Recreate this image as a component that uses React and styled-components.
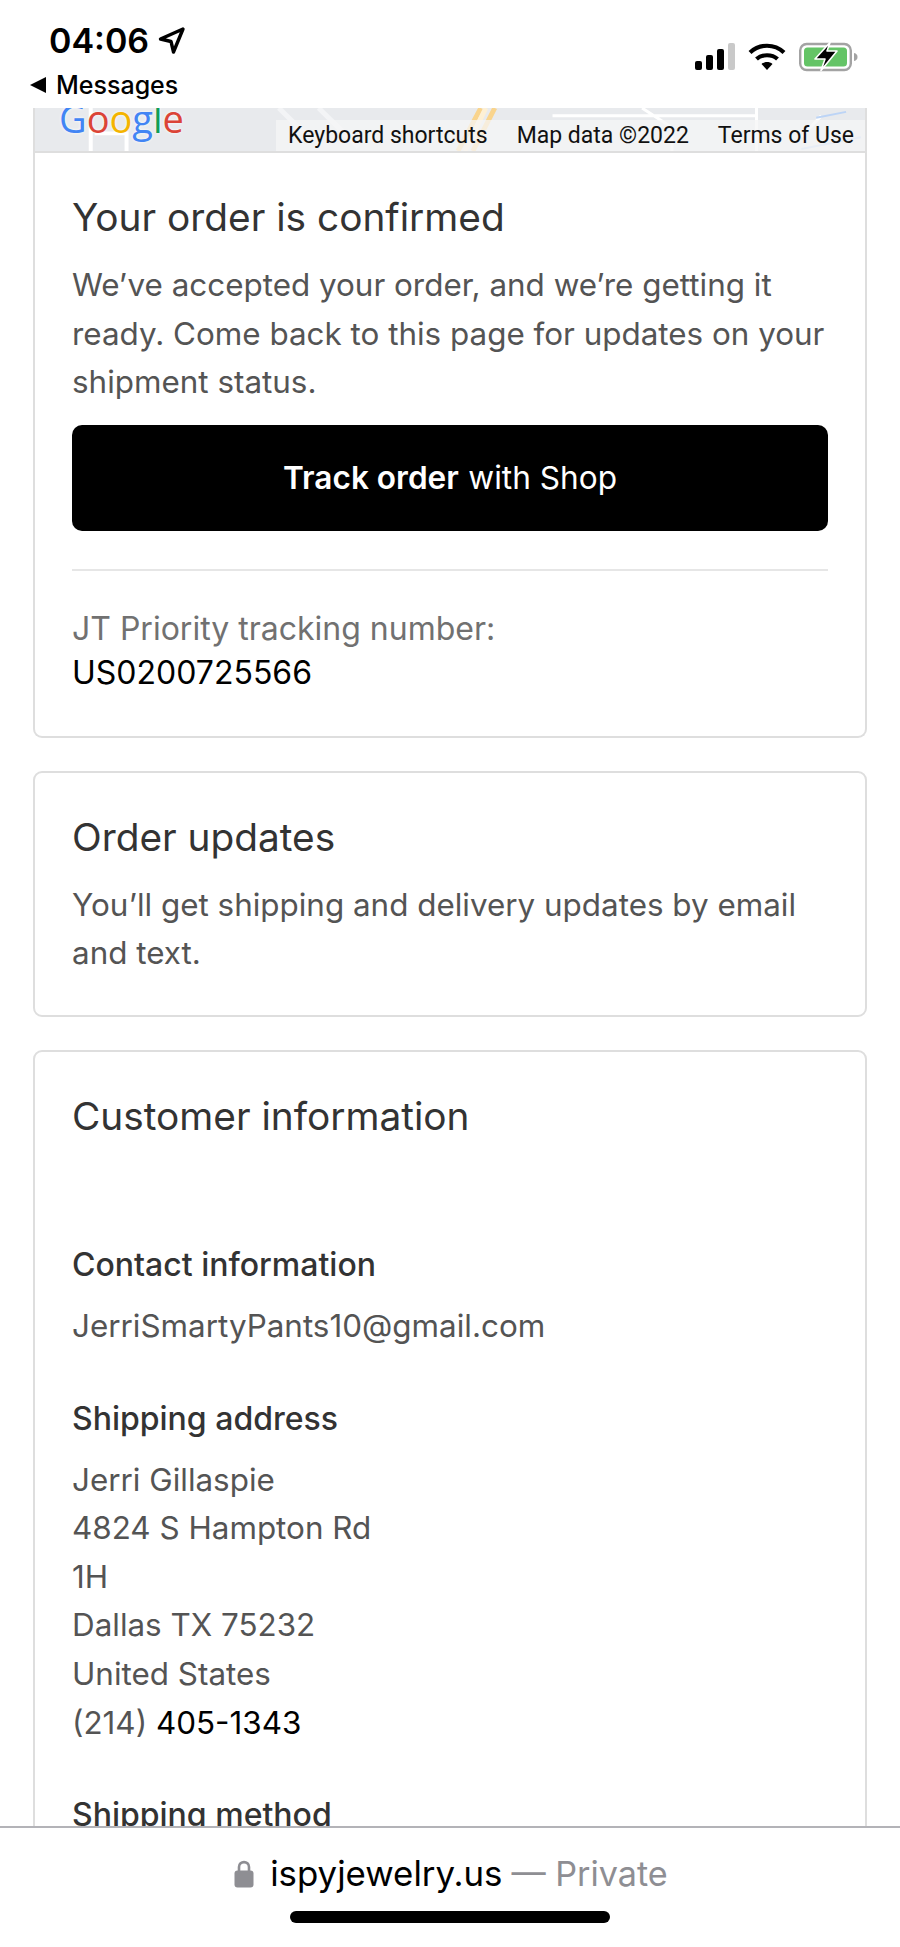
import styled, { createGlobalStyle } from 'styled-components';

const GlobalStyle = createGlobalStyle`
  html, body {
    margin: 0;
    padding: 0;
    background: #fff;
  }
  * {
    box-sizing: border-box;
  }
`;

function LocationArrow() {
  return (
    <svg width="29" height="29" viewBox="0 0 29 29" fill="none">
      <path d="M26 3 L3.5 13 L14 15.5 L16.5 26 Z" stroke="#000" strokeWidth="3.4" strokeLinejoin="round" />
    </svg>
  );
}

function SignalIcon() {
  return (
    <svg width="40" height="28" viewBox="0 0 40 28">
      <rect x="0" y="18" width="7" height="9" rx="2" fill="#000" />
      <rect x="11" y="12" width="7" height="15" rx="2" fill="#000" />
      <rect x="22" y="6" width="7" height="21" rx="2" fill="#000" />
      <rect x="33" y="0" width="7" height="27" rx="2" fill="#c9c9c9" />
    </svg>
  );
}

function WifiIcon() {
  return (
    <svg width="38" height="28" viewBox="0 0 38 28" fill="none">
      <path d="M2 9.5 C11.5 0.5 26.5 0.5 36 9.5" stroke="#000" strokeWidth="4.2" />
      <path d="M8.5 16 C14 11 24 11 29.5 16" stroke="#000" strokeWidth="4.2" />
      <path d="M13.5 21 C16.5 18.4 21.5 18.4 24.5 21 L19 27 Z" fill="#000" />
    </svg>
  );
}

function BatteryIcon() {
  return (
    <svg width="59" height="30" viewBox="0 0 59 30" fill="none">
      <rect x="1.2" y="2" width="50.6" height="26" rx="6.5" stroke="#a3a3a3" strokeWidth="2.4" />
      <rect x="5" y="5.5" width="43" height="19" rx="3.5" fill="#64c466" />
      <path d="M55 11 C57.5 11.5 58.5 13 58.5 15 C58.5 17 57.5 18.5 55 19 Z" fill="#a3a3a3" />
      <path d="M31 0.5 L16 17 H26 L22 28.500 L38 9 H28 Z" fill="#000" stroke="#fff" strokeWidth="1.6" strokeLinejoin="round" />
    </svg>
  );
}

function LockIcon() {
  return (
    <svg width="20" height="29" viewBox="0 0 20 29" fill="none">
      <path d="M5 13 V8 C5 1.5 15 1.5 15 8 V13" stroke="#8e8e93" strokeWidth="2.6" />
      <rect x="0.5" y="11.5" width="19" height="17" rx="3" fill="#8e8e93" />
    </svg>
  );
}

function MapRoads() {
  return (
    <RoadsSvg viewBox="0 0 834 44" preserveAspectRatio="none" fill="none">
      <path d="M56 0 V44 M88 26 H92 V44 M60 26 H92" stroke="#fff" strokeWidth="4" />
      <path d="M245 0 L275 30 M285 0 L325 40" stroke="#f3f4f6" strokeWidth="5" />
      <path d="M448 0 L425 44 M462 0 L440 44" stroke="#f9d48d" strokeWidth="5" />
      <path d="M453 0 L432 44" stroke="#fdf0d5" strokeWidth="5" />
      <path d="M520 8 H725 M725 0 V44 M610 0 L640 20 V44 M770 30 L790 8" stroke="#fff" strokeWidth="3" />
      <path d="M785 10 L815 4 M770 42 L830 30" stroke="#bcd4f6" strokeWidth="2" />
    </RoadsSvg>
  );
}

function GoogleLogo() {
  return (
    <LogoText>
      <LogoLetter $color="#4285f4">G</LogoLetter>
      <LogoLetter $color="#db4437">o</LogoLetter>
      <LogoLetter $color="#f4b400">o</LogoLetter>
      <LogoLetter $color="#4285f4">g</LogoLetter>
      <LogoLetter $color="#0f9d58">l</LogoLetter>
      <LogoLetter $color="#db4437">e</LogoLetter>
    </LogoText>
  );
}

export default function App() {
  return (
    <Page>
      <GlobalStyle />
      <StatusBar>
        <StatusRow>
          <TimeGroup>
            <Time>04:06</Time>
            <LocationArrow />
          </TimeGroup>
          <StatusIcons>
            <SignalIcon />
            <WifiIcon />
            <BatteryIcon />
          </StatusIcons>
        </StatusRow>
        <BackRow>
          <BackArrow />
          <span>Messages</span>
        </BackRow>
      </StatusBar>

      <Content>
        <Card>
          <MapStrip>
            <MapRoads />
            <GoogleLogo />
            <MapLinks>
              <span>Keyboard shortcuts</span>
              <span>Map data ©2022</span>
              <span>Terms of Use</span>
            </MapLinks>
          </MapStrip>
          <CardBody>
            <Title>Your order is confirmed</Title>
            <BodyText>We’ve accepted your order, and we’re getting it ready. Come back to this page for updates on your shipment status.</BodyText>
            <TrackButton><b>Track order</b> with Shop</TrackButton>
            <Divider />
            <TrackLabel>JT Priority tracking number:</TrackLabel>
            <TrackNumber>US0200725566</TrackNumber>
          </CardBody>
        </Card>

        <Card>
          <CardBody>
            <Title>Order updates</Title>
            <BodyText>You’ll get shipping and delivery updates by email and text.</BodyText>
          </CardBody>
        </Card>

        <Card>
          <CardBody>
            <Title>Customer information</Title>
            <InfoBlock $first>
              <InfoTitle>Contact information</InfoTitle>
              <BodyText>JerriSmartyPants10@gmail.com</BodyText>
            </InfoBlock>
            <InfoBlock>
              <InfoTitle>Shipping address</InfoTitle>
              <BodyText>
                Jerri Gillaspie<br />
                4824 S Hampton Rd<br />
                1H<br />
                Dallas TX 75232<br />
                United States<br />
                (214) <Phone>405-1343</Phone>
              </BodyText>
            </InfoBlock>
            <InfoBlock>
              <InfoTitle>Shipping method</InfoTitle>
            </InfoBlock>
          </CardBody>
        </Card>
      </Content>

      <BottomBar>
        <AddressRow>
          <LockIcon />
          <Domain>ispyjewelry.us</Domain>
          <Private>— Private</Private>
        </AddressRow>
        <HomeIndicator />
      </BottomBar>
    </Page>
  );
}

const Page = styled.div`
  width: 900px;
  height: 1947px;
  display: flex;
  flex-direction: column;
  overflow: hidden;
  background: #fff;
  font-family: Inter, "Liberation Sans", sans-serif;
`;

const StatusBar = styled.div`
  flex: none;
  height: 108px;
  padding: 19px 0 0 30px;
`;

const StatusRow = styled.div`
  height: 42px;
  display: flex;
  align-items: center;
  justify-content: space-between;
  padding: 0 42px 0 19px;
`;

const TimeGroup = styled.div`
  display: flex;
  align-items: center;
  gap: 8px;
`;

const Time = styled.span`
  font-size: 34px;
  font-weight: 600;
  color: #000;
`;

const StatusIcons = styled.div`
  display: flex;
  align-items: center;
  gap: 13px;
  margin-top: 34px;
`;

const BackRow = styled.div`
  display: flex;
  align-items: center;
  gap: 10px;
  height: 28px;
  margin-top: 10px;
  font-size: 25px;
  line-height: 28px;
  font-weight: 500;
  color: #000;
`;

const BackArrow = styled.span`
  width: 0;
  height: 0;
  border-top: 8px solid transparent;
  border-bottom: 8px solid transparent;
  border-right: 16px solid #000;
`;

const Content = styled.div`
  flex: 1;
  min-height: 0;
  overflow: hidden;
  padding: 0 33px;
  display: flex;
  flex-direction: column;
  gap: 33px;
`;

const Card = styled.section`
  flex: none;
  border: 2px solid #dedede;
  border-top: 0;
  border-radius: 0 0 9px 9px;
  overflow: hidden;

  & + & {
    border-top: 2px solid #dedede;
    border-radius: 9px;
  }
`;

const MapStrip = styled.div`
  position: relative;
  height: 45px;
  background: #e8eaed;
  border-bottom: 2px solid #dedede;
  overflow: hidden;
`;

const RoadsSvg = styled.svg`
  position: absolute;
  inset: 0;
  width: 100%;
  height: 100%;
`;

const LogoText = styled.div`
  position: absolute;
  left: 24px;
  top: -5px;
  font-family: "Open Sans", sans-serif;
  font-size: 38px;
  font-weight: 500;
  line-height: 30px;
  text-shadow: 0 0 3px #fff;
`;

const LogoLetter = styled.span`
  color: ${(props) => props.$color};
`;

const MapLinks = styled.div`
  position: absolute;
  right: 0;
  bottom: 0;
  height: 31px;
  display: flex;
  align-items: center;
  gap: 29px;
  padding: 0 11px 0 12px;
  background: rgba(245, 245, 245, 0.75);
  font-family: Roboto, sans-serif;
  font-size: 23px;
  color: #111;
`;

const CardBody = styled.div`
  padding: 40px 37px 37px 37px;
`;

const Title = styled.h2`
  margin: 0;
  font-size: 38.8px;
  font-weight: 400;
  line-height: 48px;
  color: #333;
`;

const BodyText = styled.p`
  margin: 20px 0 0;
  font-size: 31.4px;
  line-height: 48.6px;
  color: #545454;
`;

const TrackButton = styled.div`
  margin-top: 18px;
  height: 106px;
  display: flex;
  align-items: center;
  justify-content: center;
  gap: 0.3em;
  border-radius: 10px;
  background: #000;
  color: #fff;
  font-size: 31.6px;

  b {
    font-weight: 600;
  }
`;

const Divider = styled.hr`
  margin: 38px 0 0;
  height: 2px;
  border: 0;
  background: #e6e6e6;
`;

const TrackLabel = styled.div`
  margin-top: 36px;
  font-size: 32px;
  line-height: 44px;
  color: #717171;
`;

const TrackNumber = styled.div`
  margin-bottom: 5px;
  font-size: 32px;
  line-height: 43px;
  color: #000;
`;

const InfoBlock = styled.div`
  margin-top: ${(props) => (props.$first ? '104px' : '47px')};

  ${BodyText} {
    margin-top: 16px;
  }
`;

const InfoTitle = styled.h3`
  margin: 0;
  font-size: 32px;
  font-weight: 500;
  line-height: 42px;
  color: #333;
`;

const Phone = styled.span`
  color: #000;
`;

const BottomBar = styled.div`
  flex: none;
  height: 121px;
  border-top: 2px solid #b3b3b8;
  background: #fff;
  display: flex;
  flex-direction: column;
  align-items: center;
`;

const AddressRow = styled.div`
  height: 78px;
  margin: 6px 0 0 2px;
  display: flex;
  align-items: center;
  gap: 16px;
  font-size: 34.8px;
`;

const Domain = styled.span`
  color: #000;
`;

const Private = styled.span`
  color: #8e8e93;
  margin-left: -7px;
  font-size: 34.2px;
`;

const HomeIndicator = styled.div`
  width: 320px;
  height: 12px;
  margin-top: -1px;
  border-radius: 6px;
  background: #000;
`;
